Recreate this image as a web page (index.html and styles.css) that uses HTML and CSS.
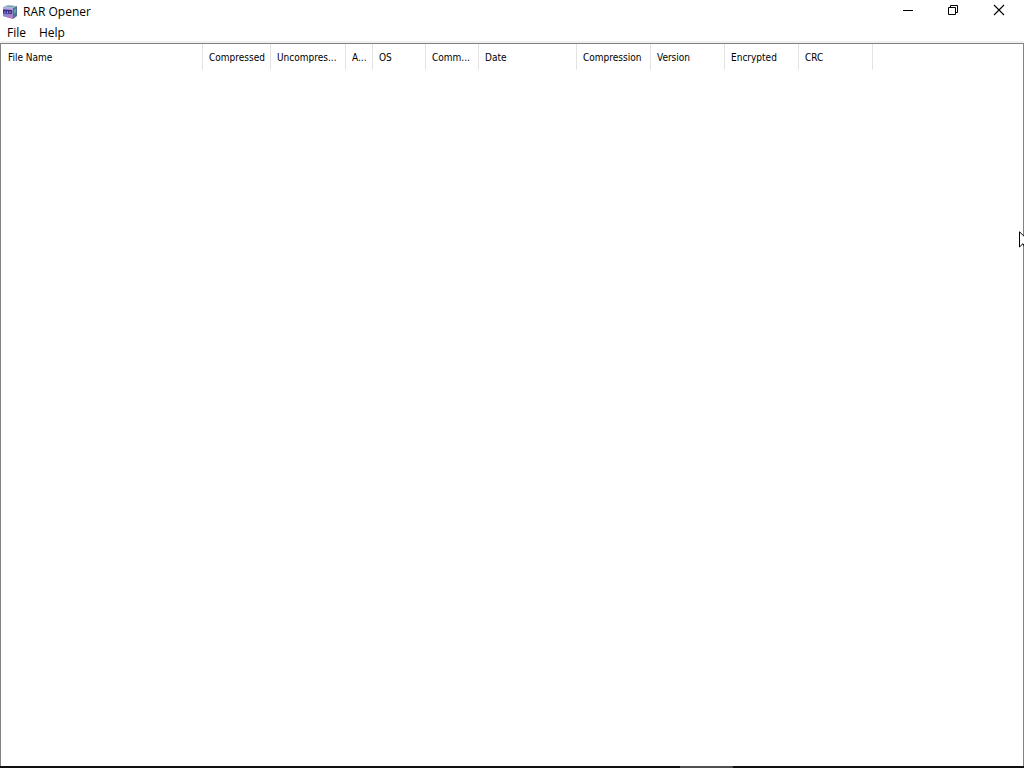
FILE: index.html
```html
<!DOCTYPE html>
<html lang="en">
<head>
<meta charset="utf-8">
<title>RAR Opener</title>
<link rel="stylesheet" href="styles.css">
</head>
<body>
<div class="window">
  <header class="titlebar">
    <svg class="app-icon" width="16" height="16" viewBox="0 0 16 16" aria-hidden="true">
      <path d="M1 3 5 1 15 2 11 4Z" fill="#a9c4da"/>
      <path d="M4 2.500 7 1.500 13 2 10 3.500Z" fill="#6aa9a4"/>
      <path d="M11 4 15 2V12L11 15Z" fill="#4f6f96"/>
      <path d="M12 6 14 4.500V8L12 10Z" fill="#63a8a6"/>
      <path d="M1 3 11 4V15L1 12Z" fill="#9a86cc"/>
      <path d="M1 3 11 4V6L1 5Z" fill="#b7a9dc"/>
      <path d="M1 5.500 10 6V10L1 9.500Z" fill="#40308c"/>
      <path d="M3 9V7.500M5.500 9V7.500M8 9V7.500" fill="none" stroke="#b5a6e0"/>
      <path d="M1 10 6 11V13.500L1 12Z" fill="#7c8fd8"/>
      <path d="M6 11 11 12V15L6 13.500Z" fill="#b878c4"/>
    </svg>
    <h1 class="title">RAR Opener</h1>
    <div class="controls">
      <button class="control" type="button" aria-label="Minimize">
        <svg width="12" height="12" viewBox="0 0 12 12"><path d="M2 6.500H12" stroke="#000" fill="none"/></svg>
      </button>
      <button class="control" type="button" aria-label="Restore">
        <svg width="12" height="12" viewBox="0 0 12 12"><path d="M1.500 3.500H8.500V10.500H1.500ZM3.500 3V1.500H10.500V8.500H9" stroke="#000" fill="none"/></svg>
      </button>
      <button class="control" type="button" aria-label="Close">
        <svg width="12" height="12" viewBox="0 0 12 12"><path d="M1 1 11 11M11 1 1 11" stroke="#000" stroke-width="1.100" fill="none"/></svg>
      </button>
    </div>
  </header>
  <nav class="menubar" aria-label="Main menu">
    <button class="menu" type="button">File</button>
    <button class="menu" type="button">Help</button>
  </nav>
  <main class="list">
    <table class="files">
      <colgroup>
        <col class="w-name"><col class="w-packed"><col class="w-size"><col class="w-attr"><col class="w-short"><col class="w-short"><col class="w-date"><col class="w-std"><col class="w-std"><col class="w-std"><col class="w-std">
      </colgroup>
      <thead>
        <tr>
          <th scope="col">File Name</th>
          <th scope="col">Compressed</th>
          <th scope="col">Uncompres...</th>
          <th scope="col">A...</th>
          <th scope="col">OS</th>
          <th scope="col">Comm...</th>
          <th scope="col">Date</th>
          <th scope="col">Compression</th>
          <th scope="col">Version</th>
          <th scope="col">Encrypted</th>
          <th scope="col">CRC</th>
        </tr>
      </thead>
    </table>
  </main>
  <footer class="edge"><span class="edge-active"></span></footer>
  <svg class="cursor" width="5" height="18" viewBox="0 0 5 18" aria-hidden="true">
    <path d="M.5 .8V16L4 12.700 6 17 12 12Z" fill="#fff" stroke="#000"/>
  </svg>
</div>
</body>
</html>
```
FILE: styles.css
```css
* { box-sizing: border-box; }

body {
  margin: 0;
  background: #fff;
  color: #000;
  font-family: "Open Sans", "Noto Sans", sans-serif;
  font-size: 12px;
}

.window {
  position: relative;
  display: flex;
  flex-direction: column;
  min-height: 100vh;
  overflow: hidden;
}

.titlebar {
  display: flex;
  align-items: center;
  height: 23px;
  padding-left: 2px;
}

.app-icon { flex: none; }

.title {
  flex: 1;
  margin: 0 0 0 5px;
  font-size: 12px;
  font-weight: 400;
  line-height: 16px;
}

.controls {
  display: flex;
  align-self: flex-start;
  padding-right: 2px;
}

.control {
  display: grid;
  place-items: center;
  width: 46px;
  height: 20px;
  padding: 0;
  border: 0;
  background: none;
}

.menubar {
  display: flex;
  height: 20px;
  border-bottom: 2px solid #f0f0f0;
}

.menu {
  padding: 0 6px 0 7px;
  border: 0;
  background: none;
  color: inherit;
  font: inherit;
  line-height: 20px;
}

.list {
  flex: 1;
  border: 1px solid #828282;
  border-bottom: 0;
}

.files {
  table-layout: fixed;
  width: 872px;
  border-collapse: separate;
  border-spacing: 0;
}

.files th {
  height: 26px;
  padding: 2px 0 0 6px;
  border-right: 1px solid #e3e3e3;
  font-family: "DejaVu Sans Condensed", "DejaVu Sans", sans-serif;
  font-size: 10px;
  font-weight: 400;
  line-height: 16px;
  text-align: left;
  white-space: nowrap;
}

.files th:first-child { padding-left: 7px; }

.w-name { width: 202px; }
.w-packed { width: 68px; }
.w-size { width: 75px; }
.w-attr { width: 27px; }
.w-short { width: 53px; }
.w-date { width: 98px; }
.w-std { width: 74px; }

.edge {
  display: flex;
  justify-content: center;
  height: 2px;
  padding-left: 389px;
  background: #101010;
}

.edge-active {
  width: 53px;
  background: #505050;
}

.cursor {
  position: absolute;
  top: 231px;
  right: 0;
}
```
